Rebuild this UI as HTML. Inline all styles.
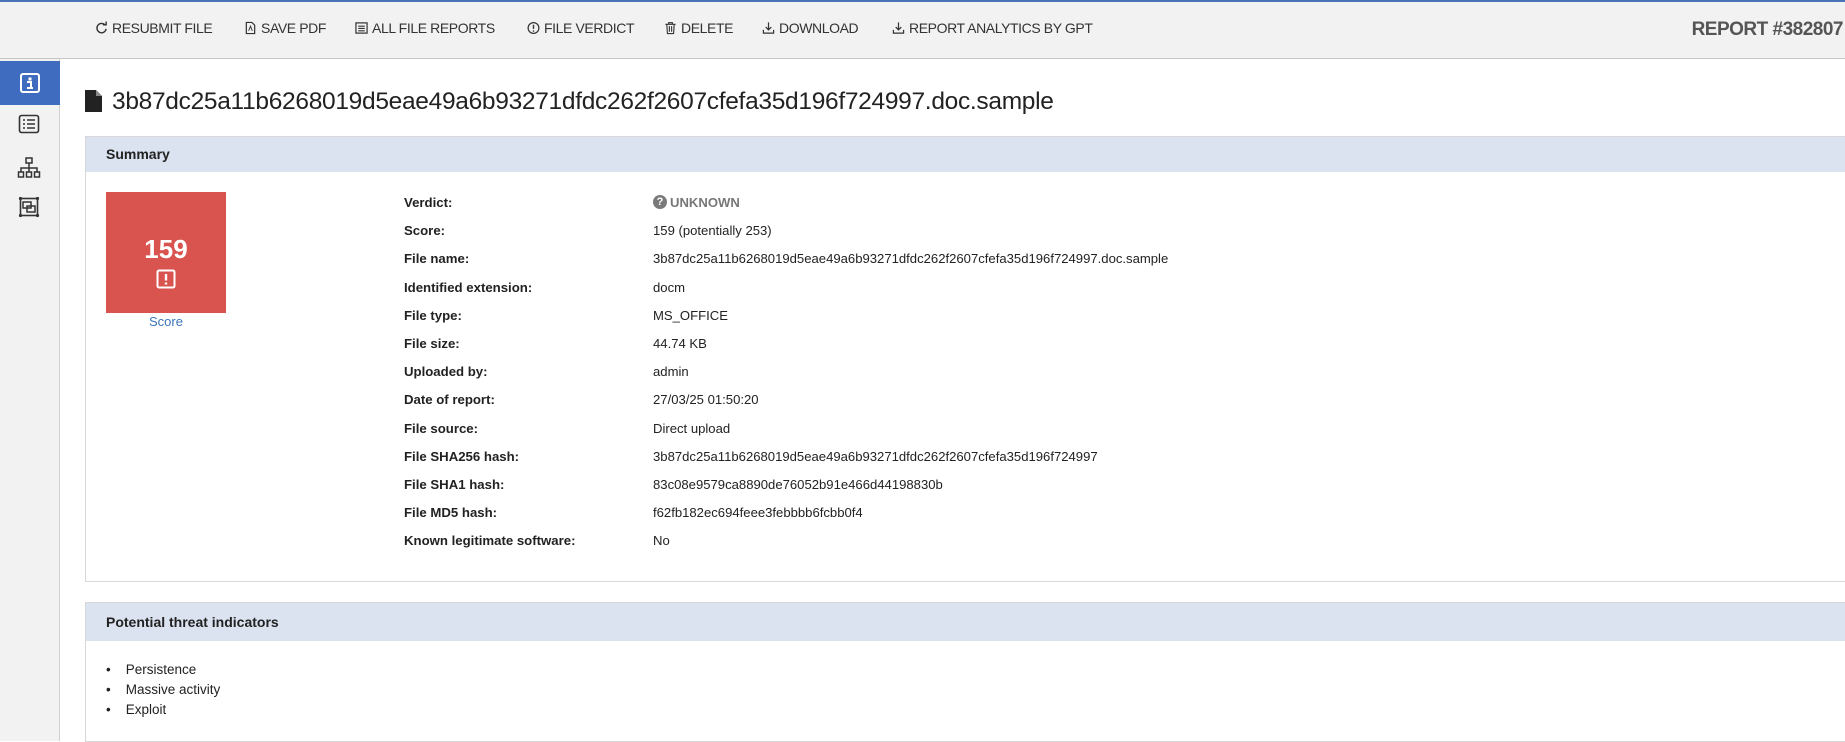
<!DOCTYPE html>
<html><head><style>
*{margin:0;padding:0;box-sizing:border-box}
body{width:1845px;height:741px;overflow:hidden;background:#fff;font-family:"Liberation Sans",Arial,sans-serif;position:relative;color:#222}
.abs{position:absolute}
#topline{left:0;top:0;width:1845px;height:2px;background:#4a72b8}
#toolbar{left:0;top:2px;width:1845px;height:57px;background:#f2f2f2;border-bottom:1px solid #c8c8c8}
#side{left:0;top:59px;width:60px;height:682px;background:#f2f2f2;border-right:1px solid #d0d0d0}
.tb{top:20px;font-size:14px;color:#333;letter-spacing:-0.4px;white-space:nowrap;display:flex;align-items:center;gap:4px}
.tb svg{width:13px;height:14px}
#rep{right:2px;top:19px;font-size:19px;font-weight:bold;color:#555;letter-spacing:-0.5px}
#title{left:112px;top:88px;font-size:24.5px;color:#222;letter-spacing:-0.3px}
.panel{left:85px;width:1765px;border:1px solid #d8d8d8;background:#fff}
.ph{height:35px;background:#dbe2f0;font-size:14px;font-weight:bold;padding:9px 20px;color:#222}
.lbl{left:404px;font-size:13.2px;font-weight:bold;color:#222}
.val{left:653px;font-size:13.1px;color:#222}
</style></head><body>
<div class="abs" id="toolbar"></div>
<div class="abs" id="topline"></div>
<div class="abs" id="side"></div>
<div class="abs" style="left:0;top:61px;width:60px;height:44px;background:#3f6cbf"></div>
<svg class="abs" style="left:19px;top:72px" width="22" height="22" viewBox="0 0 22 22"><rect x="2" y="2" width="18" height="18" rx="2" fill="none" stroke="#fff" stroke-width="2"/><rect x="9.5" y="5.5" width="3" height="3" fill="#fff"/><path d="M8 10h4v6h2M8 16h6" stroke="#fff" stroke-width="2" fill="none"/></svg>
<svg class="abs" style="left:18px;top:114px" width="22" height="20" viewBox="0 0 22 20"><rect x="1.5" y="1.5" width="19" height="17" rx="2" fill="none" stroke="#333" stroke-width="1.6"/><path d="M5 6h2M9 6h8M5 10h2M9 10h8M5 14h2M9 14h8" stroke="#333" stroke-width="1.6"/></svg>
<svg class="abs" style="left:17px;top:157px" width="24" height="22" viewBox="0 0 24 22"><rect x="9" y="1" width="6" height="5" fill="none" stroke="#333" stroke-width="1.5"/><path d="M12 6v5M4 15v-4h16v4M12 11v4" stroke="#333" stroke-width="1.5" fill="none"/><rect x="1.5" y="15" width="5" height="5" fill="none" stroke="#333" stroke-width="1.5"/><rect x="9.5" y="15" width="5" height="5" fill="none" stroke="#333" stroke-width="1.5"/><rect x="17.5" y="15" width="5" height="5" fill="none" stroke="#333" stroke-width="1.5"/></svg>
<svg class="abs" style="left:18px;top:196px" width="22" height="22" viewBox="0 0 22 22"><rect x="2.5" y="2.5" width="17" height="17" fill="none" stroke="#333" stroke-width="1.6"/><rect x="5" y="6" width="8" height="6" fill="none" stroke="#333" stroke-width="1.5"/><rect x="9" y="10" width="8" height="6" fill="none" stroke="#333" stroke-width="1.5"/><circle cx="2.5" cy="2.5" r="1.6" fill="#333"/><circle cx="19.5" cy="2.5" r="1.6" fill="#333"/><circle cx="2.5" cy="19.5" r="1.6" fill="#333"/><circle cx="19.5" cy="19.5" r="1.6" fill="#333"/></svg>

<div class="abs tb" style="left:95px"><svg viewBox="0 0 14 14"><path d="M11 4A5 5 0 1 0 12 8" fill="none" stroke="#333" stroke-width="1.5"/><path d="M8.5 3.5h3.5v-3.5" fill="none" stroke="#333" stroke-width="1.5"/></svg>RESUBMIT FILE</div>
<div class="abs tb" style="left:244px"><svg viewBox="0 0 14 14"><path d="M2.5 1h6l3 3v9h-9z" fill="none" stroke="#333" stroke-width="1.3"/><path d="M5 10l2-5 2 5" fill="none" stroke="#333" stroke-width="1"/></svg>SAVE PDF</div>
<div class="abs tb" style="left:355px"><svg viewBox="0 0 14 14"><rect x="1" y="1.5" width="12" height="11" fill="none" stroke="#333" stroke-width="1.3"/><path d="M3.5 5h7M3.5 7.5h7M3.5 10h7" stroke="#333" stroke-width="1.2"/></svg>ALL FILE REPORTS</div>
<div class="abs tb" style="left:527px"><svg viewBox="0 0 14 14"><circle cx="7" cy="7" r="5.8" fill="none" stroke="#333" stroke-width="1.3"/><path d="M7 3.5v4.5M7 9.5v1.5" stroke="#333" stroke-width="1.5"/></svg>FILE VERDICT</div>
<div class="abs tb" style="left:664px"><svg viewBox="0 0 14 14"><path d="M1.5 3h11M5 3V1.3h4V3M3 3l.7 10h6.6L11 3M5.8 5v6M8.2 5v6" fill="none" stroke="#333" stroke-width="1.2"/></svg>DELETE</div>
<div class="abs tb" style="left:762px"><svg viewBox="0 0 14 14"><path d="M7 1v8M4 6l3 3 3-3M1.5 9v3.5h11V9" fill="none" stroke="#333" stroke-width="1.3"/></svg>DOWNLOAD</div>
<div class="abs tb" style="left:892px"><svg viewBox="0 0 14 14"><path d="M7 1v8M4 6l3 3 3-3M1.5 9v3.5h11V9" fill="none" stroke="#333" stroke-width="1.3"/></svg>REPORT ANALYTICS BY GPT</div>
<div class="abs" id="rep">REPORT #382807</div>

<svg class="abs" style="left:85px;top:90px" width="17" height="22" viewBox="0 0 17 22"><path d="M0 0h11l6 6v16H0z" fill="#222"/><path d="M11 0v6h6z" fill="#888"/></svg>
<div class="abs" id="title">3b87dc25a11b6268019d5eae49a6b93271dfdc262f2607cfefa35d196f724997.doc.sample</div>

<div class="abs panel" style="top:136px;height:446px"><div class="ph">Summary</div></div>
<div class="abs" style="left:106px;top:192px;width:120px;height:121px;background:#d9534f;color:#fff;text-align:center">
<div style="font-size:26px;font-weight:bold;margin-top:44px;line-height:26px">159</div>
<svg width="20" height="20" viewBox="0 0 20 20" style="margin-top:7px"><rect x="1.5" y="1.5" width="17" height="17" rx="1.5" fill="none" stroke="#fff" stroke-width="2"/><path d="M10 5v6.5M10 13.5v2" stroke="#fff" stroke-width="2.4"/></svg>
</div>
<div class="abs" style="left:106px;top:314px;width:120px;text-align:center;font-size:13px;color:#3a76b8">Score</div>

<div class="abs lbl" style="top:195px">Verdict:</div>
<div class="abs" style="left:653px;top:195px;width:14px;height:14px;border-radius:50%;background:#7a7a7a;color:#fff;font-size:11px;font-weight:bold;text-align:center;line-height:14px">?</div>
<div class="abs val" style="top:195px;left:670px;color:#777;font-weight:bold">UNKNOWN</div>
<div class="abs lbl" style="top:223px">Score:</div><div class="abs val" style="top:223px">159 (potentially 253)</div>
<div class="abs lbl" style="top:251px">File name:</div><div class="abs val" style="top:251px">3b87dc25a11b6268019d5eae49a6b93271dfdc262f2607cfefa35d196f724997.doc.sample</div>
<div class="abs lbl" style="top:280px">Identified extension:</div><div class="abs val" style="top:280px">docm</div>
<div class="abs lbl" style="top:308px">File type:</div><div class="abs val" style="top:308px">MS_OFFICE</div>
<div class="abs lbl" style="top:336px">File size:</div><div class="abs val" style="top:336px">44.74 KB</div>
<div class="abs lbl" style="top:364px">Uploaded by:</div><div class="abs val" style="top:364px">admin</div>
<div class="abs lbl" style="top:392px">Date of report:</div><div class="abs val" style="top:392px">27/03/25 01:50:20</div>
<div class="abs lbl" style="top:421px">File source:</div><div class="abs val" style="top:421px">Direct upload</div>
<div class="abs lbl" style="top:449px">File SHA256 hash:</div><div class="abs val" style="top:449px">3b87dc25a11b6268019d5eae49a6b93271dfdc262f2607cfefa35d196f724997</div>
<div class="abs lbl" style="top:477px">File SHA1 hash:</div><div class="abs val" style="top:477px">83c08e9579ca8890de76052b91e466d44198830b</div>
<div class="abs lbl" style="top:505px">File MD5 hash:</div><div class="abs val" style="top:505px">f62fb182ec694feee3febbbb6fcbb0f4</div>
<div class="abs lbl" style="top:533px">Known legitimate software:</div><div class="abs val" style="top:533px">No</div>

<div class="abs panel" style="top:602px;height:140px"><div class="ph" style="height:38px;padding-top:11px">Potential threat indicators</div></div>
<div class="abs" style="left:106px;top:660px;font-size:13.5px;line-height:20px">
<div>•&nbsp;&nbsp;&nbsp;&nbsp;Persistence</div><div>•&nbsp;&nbsp;&nbsp;&nbsp;Massive activity</div><div>•&nbsp;&nbsp;&nbsp;&nbsp;Exploit</div></div>
</body></html>
